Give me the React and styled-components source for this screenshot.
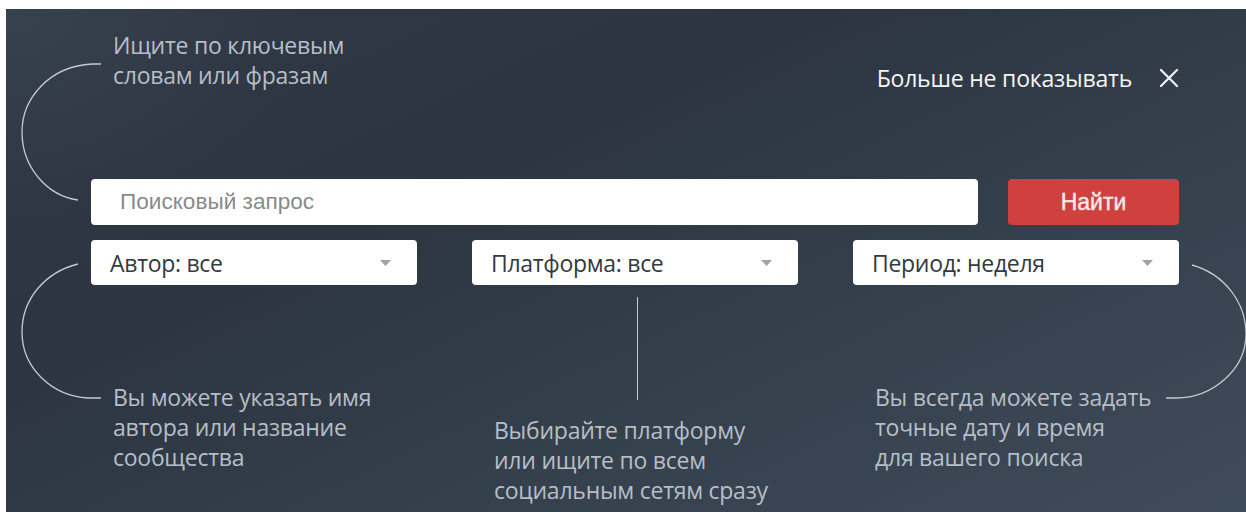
import React from 'react'
import styled, { createGlobalStyle } from 'styled-components'

const GlobalStyle = createGlobalStyle`
  html, body {
    margin: 0;
    padding: 0;
    background: #ffffff;
  }
  * {
    box-sizing: border-box;
  }
`

const filters = [
  { label: 'Автор: все' },
  { label: 'Платформа: все' },
  { label: 'Период: неделя' },
]

const Caret = () => (
  <CaretIcon viewBox="0 0 11 6" aria-hidden="true">
    <path d="M0 0 H11 L5.5 6 Z" fill="#a3a3a3" />
  </CaretIcon>
)

const CloseIcon = () => (
  <svg width="20" height="20" viewBox="0 0 20 20" aria-hidden="true">
    <path d="M2 2 L18 18 M18 2 L2 18" stroke="#f2f4f6" strokeWidth="2.2" strokeLinecap="round" />
  </svg>
)

// curved pointer lines between the hints and the controls
const Connectors = () => (
  <Overlay viewBox="0 0 1240 503" aria-hidden="true">
    <g transform="translate(-6 -9)" fill="none" stroke="#c3cad2" strokeWidth="1.3">
      <path d="M101 64 H92 C50 66 22 98 22 132 C22 168 48 196 78 200" />
      <path d="M78 264 C46 272 22 298 22 332 C22 368 52 396 88 398 H101" />
      <path d="M1192 265 C1224 274 1246 302 1246 334 C1246 370 1212 398 1176 398 H1166" />
    </g>
  </Overlay>
)

const App = () => {
  return (
    <>
      <GlobalStyle />
      <Panel>
        <Connectors />
        <TopRow>
          <Hint>
            Ищите по ключевым<br />
            словам или фразам
          </Hint>
          <Dismiss type="button">
            Больше не показывать
            <CloseIcon />
          </Dismiss>
        </TopRow>

        <SearchRow>
          <SearchInput placeholder="Поисковый запрос" />
          <FindButton type="button">Найти</FindButton>
        </SearchRow>

        <FilterRow>
          {filters.map((f) => (
            <Select key={f.label}>
              <span>{f.label}</span>
              <Caret />
            </Select>
          ))}
        </FilterRow>

        <HintRow>
          <HintCol $offset={85}>
            <Hint>
              Вы можете указать имя<br />
              автора или название<br />
              сообщества
            </Hint>
          </HintCol>
          <HintCol $offset={0}>
            <Stem />
            <Hint>
              Выбирайте платформу<br />
              или ищите по всем<br />
              социальным сетям сразу
            </Hint>
          </HintCol>
          <HintCol $offset={85}>
            <Hint>
              Вы всегда можете задать<br />
              точные дату и время<br />
              для вашего поиска
            </Hint>
          </HintCol>
        </HintRow>
      </Panel>
    </>
  )
}

export default App

const Panel = styled.div`
  position: relative;
  margin: 9px 0 0 6px;
  height: 503px;
  padding: 21px 67px 0 85px;
  overflow: hidden;
  background:
    radial-gradient(ellipse 420px 300px at 0% 0%, rgba(120, 135, 150, 0.12), transparent 70%),
    linear-gradient(155deg, #2f3844 0%, #2c3541 35%, #35404d 65%, #3e4b59 100%);
  font-family: 'Open Sans', 'Noto Sans', sans-serif;
`

const Overlay = styled.svg`
  position: absolute;
  left: 0;
  top: 0;
  width: 1240px;
  height: 503px;
  pointer-events: none;
`

const TopRow = styled.div`
  display: flex;
  justify-content: space-between;
  align-items: flex-start;
  height: 149px;
  padding-left: 22px;
`

const Hint = styled.p`
  margin: 0;
  color: #b6bec7;
  font-size: 23px;
  line-height: 30px;
  letter-spacing: -0.25px;
`

const Dismiss = styled.button`
  display: flex;
  align-items: center;
  gap: 27px;
  margin-top: 33px;
  padding: 0;
  border: 0;
  background: none;
  color: #f4f5f7;
  font-family: 'Open Sans', 'Noto Sans', sans-serif;
  font-size: 23px;
  line-height: 30px;
  letter-spacing: -0.2px;
  cursor: pointer;
`

const SearchRow = styled.div`
  display: flex;
  gap: 30px;
  height: 46px;
`

const SearchInput = styled.input`
  flex: 1;
  height: 46px;
  padding: 0 29px;
  border: 0;
  border-radius: 4px;
  background: #ffffff;
  font-family: 'Liberation Sans', Arial, sans-serif;
  font-size: 22.6px;
  color: #333;
  outline: none;
  &::placeholder {
    color: #8a8a8a;
  }
`

const FindButton = styled.button`
  width: 171px;
  height: 46px;
  border: 0;
  border-radius: 4px;
  background: #d0403f;
  color: #fbeaea;
  font-family: 'Liberation Sans', Arial, sans-serif;
  font-size: 23px;
  font-weight: 400;
  -webkit-text-stroke: 0.4px #fbeaea;
  cursor: pointer;
`

const FilterRow = styled.div`
  display: grid;
  grid-template-columns: repeat(3, 1fr);
  gap: 55px;
  margin-top: 15px;
`

const Select = styled.div`
  display: flex;
  align-items: center;
  justify-content: space-between;
  height: 45px;
  padding: 0 26px 0 19px;
  border-radius: 4px;
  background: #ffffff;
  color: #333a40;
  font-size: 23px;
  letter-spacing: -0.3px;
`

const CaretIcon = styled.svg`
  width: 11px;
  height: 6px;
  margin-top: 1px;
`

const HintRow = styled.div`
  display: grid;
  grid-template-columns: repeat(3, 1fr);
  gap: 55px;
  margin-top: 12px;
`

const HintCol = styled.div`
  display: flex;
  flex-direction: column;
  align-items: flex-start;
  padding: ${(p) => p.$offset}px 0 0 22px;
`

const Stem = styled.div`
  width: 1.3px;
  height: 103px;
  margin: 0 0 15px 143px;
  background: #c3cad2;
`
